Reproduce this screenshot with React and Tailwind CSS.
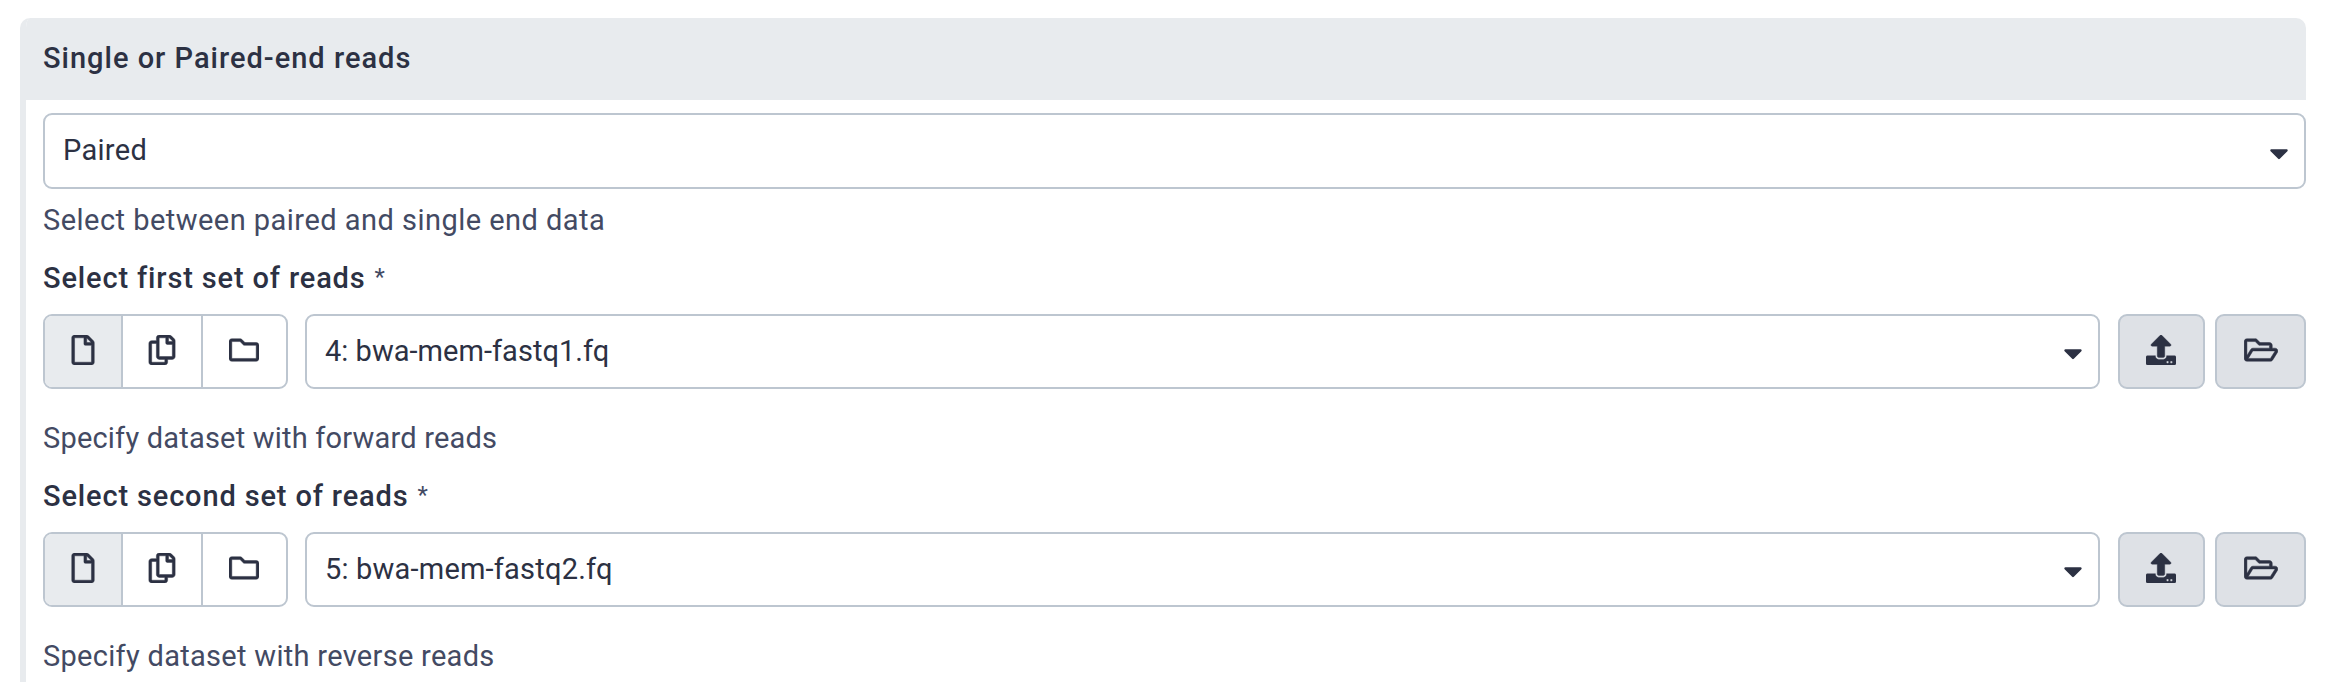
import { FaCaretDown, FaRegCopy, FaRegFile, FaRegFolder, FaRegFolderOpen, FaUpload } from "react-icons/fa";

function SelectBox({ value, className = "", textClass, caretClass }) {
  return (
    <div className={`flex items-center justify-between rounded-[9px] border-2 border-[#bdc6d0] bg-white pl-[18px] pr-[10px] ${className}`}>
      <span className={`whitespace-nowrap pb-[2px] leading-[42px] ${textClass}`}>{value}</span>
      <FaCaretDown className={`size-[30px] ${caretClass}`} />
    </div>
  );
}

function DatasetField({ label, labelClass, value, valueClass, help, helpClass }) {
  return (
    <section className="flex h-[218px] flex-col">
      <div className="flex h-[42px] items-center whitespace-nowrap leading-[42px]">
        <span className={`font-medium ${labelClass}`}>{label}</span>
        <span className="ml-[9px] pb-[2px] text-[24px] text-[#434a63]">*</span>
      </div>
      <div className="mt-[15px] flex h-[75px]">
        <div className="flex w-[245px] overflow-hidden rounded-[9px] border-2 border-[#bdc6d0]">
          <button className="flex w-[78px] items-center justify-center border-r-2 border-[#bdc6d0] bg-[#e8ebee] pb-[3px]">
            <FaRegFile className="size-[30px] stroke-[#2c3143] stroke-[8]" />
          </button>
          <button className="flex w-[80px] items-center justify-center border-r-2 border-[#bdc6d0] pb-[3px]">
            <FaRegCopy className="size-[30px] stroke-[#2c3143] stroke-[8]" />
          </button>
          <button className="flex flex-1 items-center justify-center pb-[3px] pr-px">
            <FaRegFolder className="size-[30px] stroke-[#2c3143] stroke-[8]" />
          </button>
        </div>
        <SelectBox value={value} textClass={valueClass} caretClass="mt-[3px]" className="ml-[17px] flex-1" />
        <button className="ml-[18px] flex w-[87px] items-center justify-center rounded-[9px] border-2 border-[#bdc6d0] bg-[#dee1e6] pb-[3px] pr-px">
          <FaUpload className="size-[30px] stroke-[#2c3143] stroke-[6]" />
        </button>
        <button className="ml-[10px] flex w-[91px] items-center justify-center rounded-[9px] border-2 border-[#bdc6d0] bg-[#dee1e6] pb-[3px]">
          <FaRegFolderOpen className="h-[30px] w-[34px] stroke-[#2c3143] stroke-[8]" />
        </button>
      </div>
      <p className={`mt-[28px] leading-[42px] text-[#434a63] ${helpClass}`}>{help}</p>
    </section>
  );
}

export default function App() {
  return (
    <main className="h-[688px] overflow-hidden bg-white pl-5 pr-[45px] pt-[18px] font-['Roboto',sans-serif] text-[29px] text-[#2c3143]">
      <div className="h-[664px] overflow-hidden rounded-t-[10px] border-l-[6px] border-[#e8ebee]">
        <header className="h-[82px] bg-[#e8ebee] pl-[17px] pt-[19px] font-medium leading-[42px]">
          <span className="tracking-[1px]">Single or Paired-end reads</span>
        </header>
        <div className="pl-[17px] pt-[13px]">
          <SelectBox value="Paired" textClass="tracking-[0.3px]" caretClass="mt-[4px]" className="h-[76px]" />
          <p className="mt-[10px] leading-[42px] tracking-[0.47px] text-[#434a63]">Select between paired and single end data</p>
          <div className="pt-[16px]">
            <DatasetField
              label="Select first set of reads"
              labelClass="tracking-[0.85px]"
              value="4: bwa-mem-fastq1.fq"
              valueClass="tracking-[0.03px]"
              help="Specify dataset with forward reads"
              helpClass="tracking-[0.2px]"
            />
            <DatasetField
              label="Select second set of reads"
              labelClass="tracking-[0.85px]"
              value="5: bwa-mem-fastq2.fq"
              valueClass="tracking-[0.2px]"
              help="Specify dataset with reverse reads"
              helpClass="tracking-[0.3px]"
            />
          </div>
        </div>
      </div>
    </main>
  );
}
